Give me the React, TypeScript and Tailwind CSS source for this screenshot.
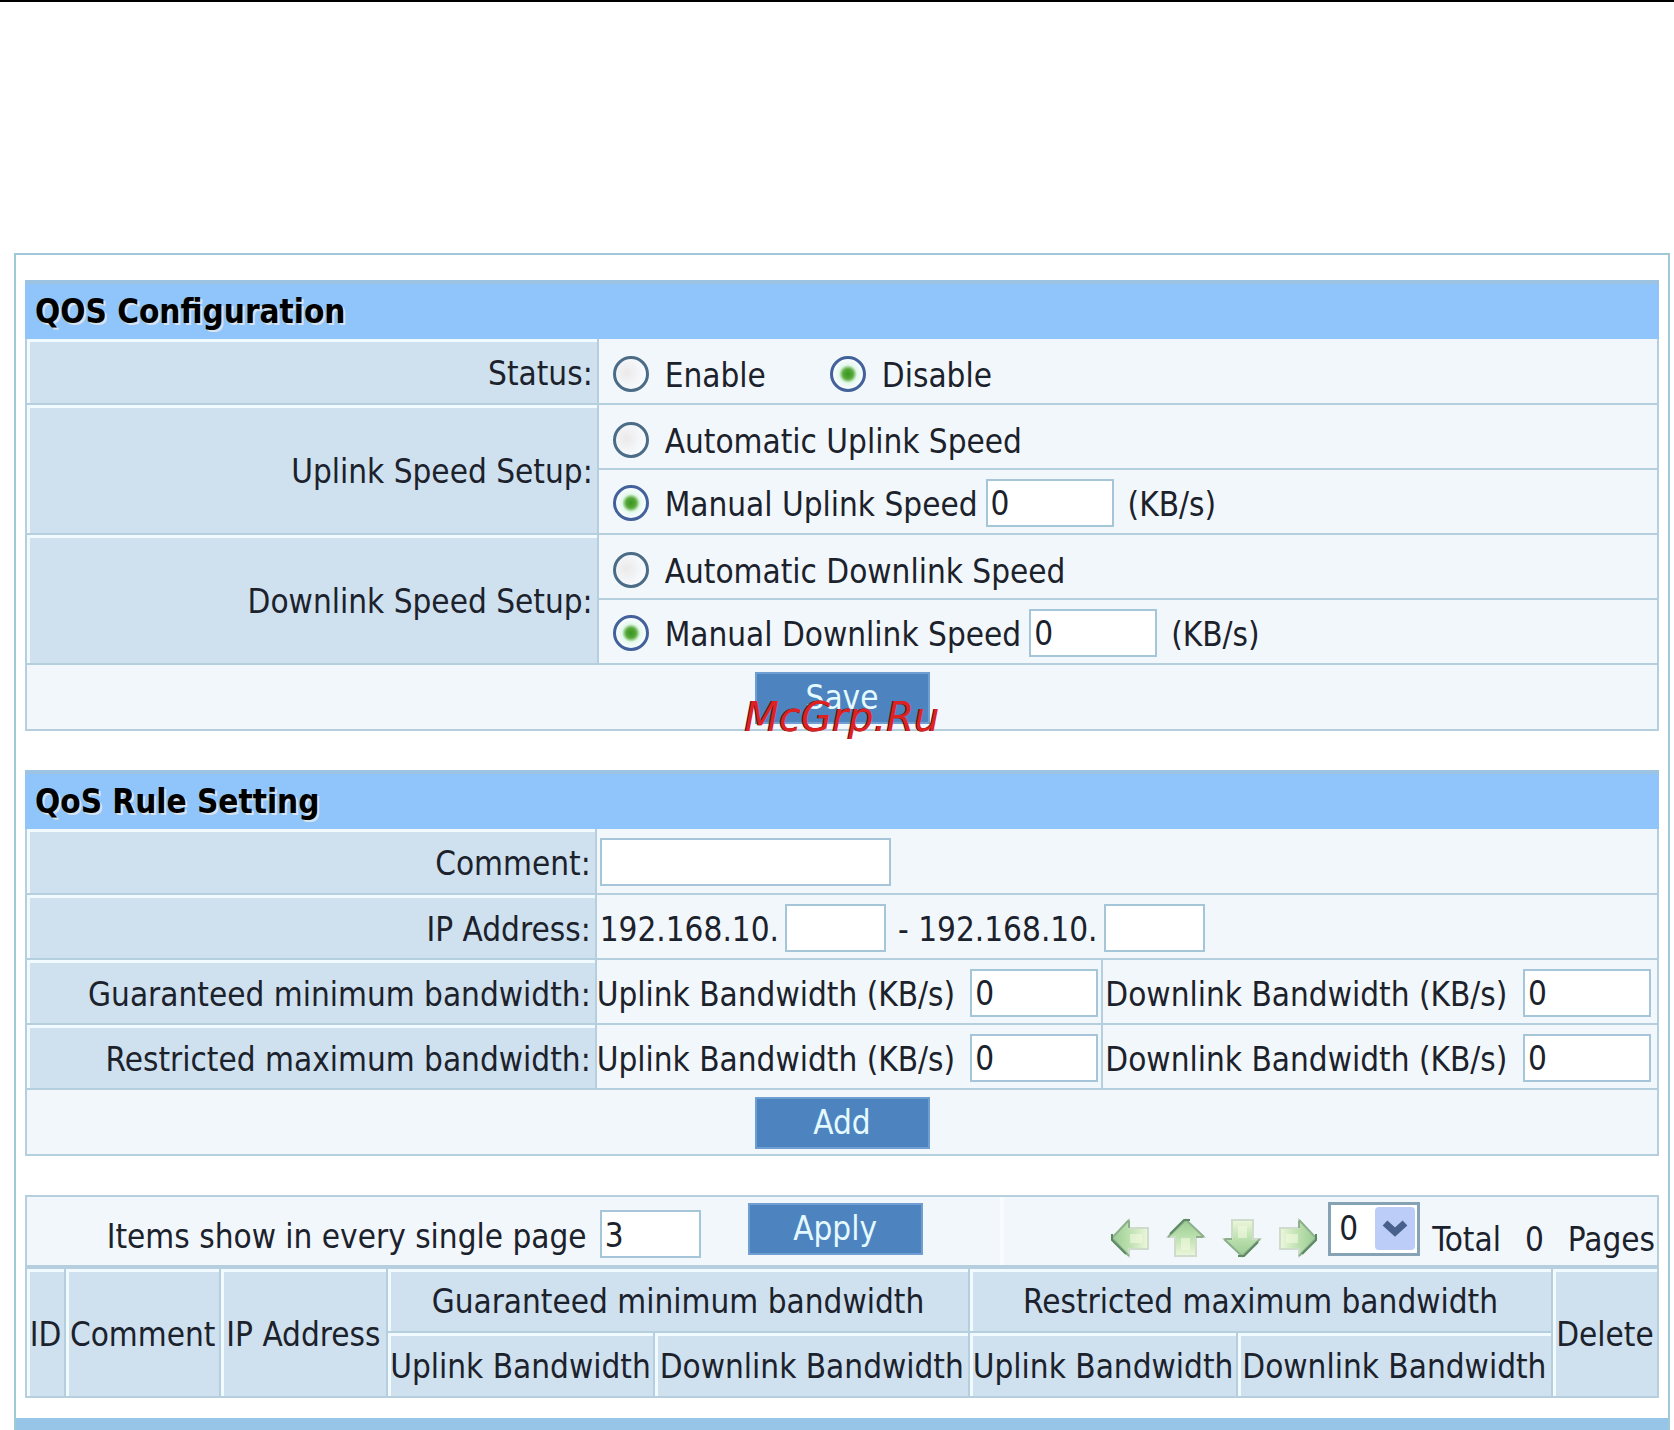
import type { ReactNode } from "react";

const HIGHLIGHT = "shadow-[inset_3px_3px_0_#f1faff]";
const LABEL_CELL = `flex items-center justify-end border-r-2 border-b-2 border-[#b5cfde] bg-[#cfe0ef] pt-1.5 pr-1 ${HIGHLIGHT}`;
const VALUE_CELL = "flex min-h-[65px] items-center border-b-2 border-[#b5cfde] bg-[#f2f7fc]";

function Card({ title, children }: { title: string; children: ReactNode }) {
  return (
    <section className="border-x-2 border-[#b5cfde]">
      <h2 className="-mx-0.5 flex h-[59px] items-center border-t-4 border-[#9cc4e2] bg-[#8fc5fa] px-2.5 font-bold text-black [text-shadow:2px_2px_0_#d9e3ec]">
        {title}
      </h2>
      {children}
    </section>
  );
}

function Radio({ id, name, label, checked }: { id: string; name: string; label: string; checked?: boolean }) {
  return (
    <>
      <input
        id={id}
        type="radio"
        name={name}
        defaultChecked={checked}
        className="size-9 shrink-0 appearance-none rounded-full border-[3px] border-[#4a6c86] bg-[radial-gradient(circle_at_35%_45%,#ebe9ea,#f8fcff_75%)] checked:border-[#43619a] checked:bg-[radial-gradient(circle,#3a9420_0,#56a93a_5px,#e3f8ea_9px,#f6fcff_14px)]"
      />
      <label htmlFor={id} className="pt-1 pl-4">
        {label}
      </label>
    </>
  );
}

function TextBox({ id, label, value, size }: { id: string; label?: string; value?: string; size: string }) {
  return (
    <input
      id={id}
      type="text"
      aria-label={label}
      defaultValue={value}
      className={`h-12 shrink-0 border-2 border-[#a4c6d8] bg-white px-[3px] pt-0.5 leading-10 outline-none ${size}`}
    />
  );
}

function ActionButton({ children }: { children: ReactNode }) {
  return (
    <button
      type="button"
      className="h-[52px] w-[175px] shrink-0 border-2 border-[#6f9fd2] bg-[#4d84c0] text-[#e4faff]"
    >
      {children}
    </button>
  );
}

function SpeedRows({ id, title, kind }: { id: string; title: string; kind: string }) {
  return (
    <div role="group" aria-label={title} className="grid grid-cols-[572fr_1059fr]">
      <div className={`row-span-2 ${LABEL_CELL}`}>{title}</div>
      <div className={`pt-1.5 pl-3.5 ${VALUE_CELL}`}>
        <Radio id={`${id}-auto`} name={id} label={`Automatic ${kind} Speed`} />
      </div>
      <div className={`pt-0.5 pl-3.5 ${VALUE_CELL}`}>
        <Radio id={`${id}-manual`} name={id} label={`Manual ${kind} Speed`} checked />
        <div className="flex items-center gap-3.5 pl-2">
          <TextBox id={`${id}-value`} label={`${kind} speed`} value="0" size="w-32" />
          <span className="pt-1">(KB/s)</span>
        </div>
      </div>
    </div>
  );
}

function BandwidthRow({ id, title }: { id: string; title: string }) {
  return (
    <div role="group" aria-label={title} className="grid grid-cols-[570fr_507fr_554fr]">
      <div className={LABEL_CELL}>{title}</div>
      <div className={`justify-between border-r-2 pt-0.5 pr-[3px] ${VALUE_CELL}`}>
        <label htmlFor={`${id}-up`} className="pt-1">
          Uplink Bandwidth (KB/s)
        </label>
        <TextBox id={`${id}-up`} value="0" size="w-32" />
      </div>
      <div className={`justify-between pt-0.5 pr-1.5 ${VALUE_CELL}`}>
        <label htmlFor={`${id}-down`} className="pt-1 pl-0.5">
          Downlink Bandwidth (KB/s)
        </label>
        <TextBox id={`${id}-down`} value="0" size="w-32" />
      </div>
    </div>
  );
}

function PageArrow({ label, turn }: { label: string; turn: string }) {
  return (
    <button type="button" aria-label={label} className="shrink-0">
      <svg viewBox="0 0 40 40" className={`size-10 ${turn}`} fill="none">
        <defs>
          <linearGradient id="arrow-fill" x1="0" y1="0" x2="1" y2="0">
            <stop offset="0" stopColor="#9bcb92" />
            <stop offset="0.45" stopColor="#b9dfac" />
            <stop offset="1" stopColor="#edf7dc" />
          </linearGradient>
        </defs>
        <path d="M2 20 L19 2 V10 H38 V31 H19 V38 Z" fill="url(#arrow-fill)" stroke="#cfdccb" strokeWidth="2" />
        <path d="M19 3 V10" stroke="#8fae8d" strokeWidth="2" />
        <path d="M19 2 L2 20 L19 38" stroke="#8bb08b" strokeWidth="2" />
        <path d="M2 16 V22 L16 36" stroke="#5a8a62" strokeWidth="2" />
        <path d="M20 16 H32 V25 H20 Z" fill="#f1fae0" opacity="0.6" />
      </svg>
    </button>
  );
}

const TH = `h-[65px] border-2 border-[#b5cfde] p-0 pt-1 font-normal ${HIGHLIGHT}`;

export default function App() {
  return (
    <div className="flex min-h-screen flex-col border-t-2 border-black bg-white font-['DejaVu_Sans_Condensed','DejaVu_Sans',sans-serif] text-[33px] leading-10 whitespace-nowrap text-[#1c222b]">
      <main className="mt-[251px] mr-1 ml-3.5 flex grow flex-col border-2 border-b-0 border-[#9fc9d8]">
        <div className="flex flex-col gap-[39px] px-[9px] pt-[25px] pb-5">
          <Card title="QOS Configuration">
            <div role="group" aria-label="Status" className="grid grid-cols-[572fr_1059fr]">
              <div className={LABEL_CELL}>Status:</div>
              <div className={`h-[66px] pt-1.5 pl-3.5 ${VALUE_CELL}`}>
                <Radio id="status-enable" name="status" label="Enable" />
                <div className="flex items-center pl-16">
                  <Radio id="status-disable" name="status" label="Disable" checked />
                </div>
              </div>
            </div>
            <SpeedRows id="uplink" title="Uplink Speed Setup:" kind="Uplink" />
            <SpeedRows id="downlink" title="Downlink Speed Setup:" kind="Downlink" />
            <div className={`relative h-[66px] justify-center pt-0.5 ${VALUE_CELL}`}>
              <ActionButton>Save</ActionButton>
              <span className="pointer-events-none absolute inset-x-0 top-8 text-center font-['DejaVu_Sans',sans-serif] text-[40px] text-[#dd2222] italic [text-shadow:-1px_0_0_#5a1414]">
                McGrp.Ru
              </span>
            </div>
          </Card>

          <Card title="QoS Rule Setting">
            <div className="grid grid-cols-[570fr_1061fr]">
              <label htmlFor="comment" className={LABEL_CELL}>
                Comment:
              </label>
              <div className={`h-[66px] pt-0.5 pl-[3px] ${VALUE_CELL}`}>
                <TextBox id="comment" size="w-[291px]" />
              </div>
              <div className={LABEL_CELL}>IP Address:</div>
              <div className={`pt-0.5 pl-[3px] ${VALUE_CELL}`}>
                <label htmlFor="ip-from" className="pt-1 pr-1.5">
                  192.168.10.
                </label>
                <TextBox id="ip-from" size="w-[101px]" />
                <label htmlFor="ip-to" className="pt-1 pr-1.5 pl-3">
                  - 192.168.10.
                </label>
                <TextBox id="ip-to" size="w-[101px]" />
              </div>
            </div>
            <BandwidthRow id="min-bandwidth" title="Guaranteed minimum bandwidth:" />
            <BandwidthRow id="max-bandwidth" title="Restricted maximum bandwidth:" />
            <div className={`h-[66px] justify-center pt-0.5 ${VALUE_CELL}`}>
              <ActionButton>Add</ActionButton>
            </div>
          </Card>

          <section>
            <div className="grid h-[70px] grid-cols-[572fr_406fr_653fr] border-2 border-b-0 border-[#b5cfde] bg-[#f2f7fc]">
              <label htmlFor="page-size" className="flex items-center justify-end pt-3 pr-3">
                Items show in every single page
              </label>
              <div className="flex items-center border-r-4 border-[#f8fcff] pl-px">
                <div className="flex pt-1.5">
                  <TextBox id="page-size" value="3" size="w-[101px]" />
                </div>
                <div className="flex pb-1 pl-[47px]">
                  <ActionButton>Apply</ActionButton>
                </div>
              </div>
              <div className="flex items-center justify-end pr-0.5">
                <div className="flex gap-4 pt-3.5 pr-2.5">
                  <PageArrow label="First page" turn="rotate-0" />
                  <PageArrow label="Previous page" turn="rotate-90" />
                  <PageArrow label="Next page" turn="-rotate-90" />
                  <PageArrow label="Last page" turn="-scale-x-100" />
                </div>
                <div className="relative mb-1 h-[54px] w-[92px] shrink-0">
                  <select
                    aria-label="Page"
                    defaultValue="0"
                    className="size-full appearance-none border-[3px] border-[#86a3b5] bg-white pl-2 leading-10 outline-none"
                  >
                    <option value="0">0</option>
                  </select>
                  <svg
                    viewBox="0 0 40 43"
                    className="pointer-events-none absolute top-[5px] right-[5px] h-[43px] w-10"
                    aria-hidden="true"
                  >
                    <rect width="40" height="43" rx="4" fill="#bccdf8" />
                    <path d="M10 16 L20 25 L30 16" fill="none" stroke="#48608c" strokeWidth="7" />
                  </svg>
                </div>
                <p className="flex gap-6 pt-[18px] pl-3">
                  <span>Total</span>
                  <span>0</span>
                  <span>Pages</span>
                </p>
              </div>
            </div>
            <table className="w-full table-fixed border-collapse border-t-4 border-[#b5cfde] bg-[#cfe0ef] text-center">
              <colgroup>
                <col className="w-[2.4%]" />
                <col className="w-[9.5%]" />
                <col className="w-[10.2%]" />
                <col className="w-[16.4%]" />
                <col className="w-[19.3%]" />
                <col className="w-[16.4%]" />
                <col className="w-[19.3%]" />
                <col className="w-[6.5%]" />
              </colgroup>
              <thead>
                <tr>
                  <th rowSpan={2} className={TH}>ID</th>
                  <th rowSpan={2} className={TH}>Comment</th>
                  <th rowSpan={2} className={TH}>IP Address</th>
                  <th colSpan={2} className={TH}>Guaranteed minimum bandwidth</th>
                  <th colSpan={2} className={TH}>Restricted maximum bandwidth</th>
                  <th rowSpan={2} className={TH}>Delete</th>
                </tr>
                <tr>
                  <th className={TH}>Uplink Bandwidth</th>
                  <th className={TH}>Downlink Bandwidth</th>
                  <th className={TH}>Uplink Bandwidth</th>
                  <th className={TH}>Downlink Bandwidth</th>
                </tr>
              </thead>
            </table>
          </section>
        </div>
        <div className="min-h-[9px] grow bg-[#96c5e8]" />
      </main>
    </div>
  );
}
